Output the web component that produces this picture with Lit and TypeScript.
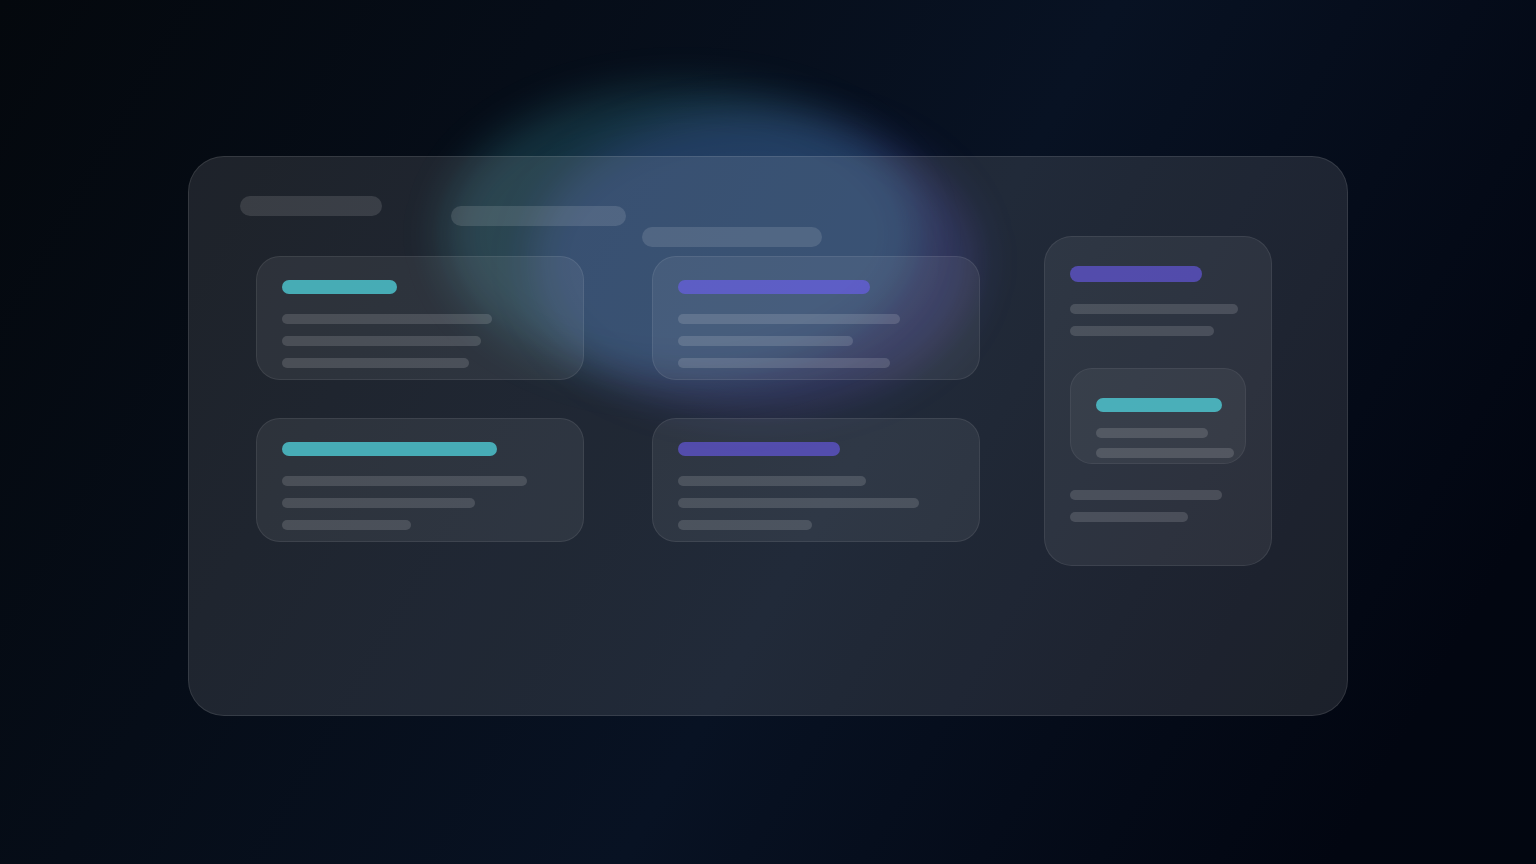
import { LitElement, html, css } from "lit";
import { customElement, property } from "lit/decorators.js";
import { styleMap } from "lit/directives/style-map.js";

interface Block {
  tone: "teal" | "violet";
  title: number;
  lines: number[];
}

const CARDS: Block[] = [
  { tone: "teal", title: 115, lines: [210, 199, 187] },
  { tone: "violet", title: 192, lines: [222, 175, 212] },
  { tone: "teal", title: 215, lines: [245, 193, 129] },
  { tone: "violet", title: 162, lines: [188, 241, 134] },
];

const TABS = [142, 175, 180];

@customElement("skeleton-bar")
class SkeletonBar extends LitElement {
  @property({ type: Number }) size = 100;
  @property() kind = "line";

  static styles = css`
    :host {
      display: block;
    }
    .bar {
      max-width: 100%;
      height: 10px;
      border-radius: 5px;
      background: rgba(255, 255, 255, 0.14);
    }
    .tab {
      height: 20px;
      border-radius: 10px;
      background: rgba(255, 255, 255, 0.12);
    }
    .teal,
    .violet {
      height: 14px;
      border-radius: 7px;
    }
    .teal {
      background: rgba(82, 224, 233, 0.7);
    }
    .violet {
      background: rgba(112, 94, 255, 0.56);
    }
    .large {
      height: 16px;
      border-radius: 8px;
    }
  `;

  render() {
    return html`<div class="bar ${this.kind}" style=${styleMap({ width: `${this.size}px` })}></div>`;
  }
}

@customElement("app-root")
class AppRoot extends LitElement {
  static styles = css`
    :host {
      display: block;
    }
    * {
      box-sizing: border-box;
    }
    .page {
      position: relative;
      min-height: 100vh;
      padding: 156px 188px 148px;
      overflow: hidden;
      background: linear-gradient(120deg, #04080d 0%, #081223 55%, #020611 90%, #020610 100%);
    }
    .glow {
      position: absolute;
      left: 50%;
      border-radius: 50%;
      filter: blur(20px);
    }
    .glow-violet {
      top: 114px;
      width: 444px;
      height: 296px;
      margin-left: -236px;
      background: rgba(112, 94, 255, 0.19);
    }
    .glow-teal {
      top: 88px;
      width: 476px;
      height: 292px;
      margin-left: -324px;
      background: rgba(78, 210, 225, 0.18);
    }
    .panel {
      position: relative;
      display: grid;
      grid-template-columns: minmax(0, 1fr) 228px;
      gap: 64px;
      align-items: start;
      min-height: 560px;
      padding: 39px 75px 39px 51px;
      border: 1px solid rgba(255, 255, 255, 0.1);
      border-radius: 36px;
      background: rgba(255, 255, 255, 0.1);
    }
    .tabs {
      display: grid;
      grid-template-columns: 211px 191px auto;
      align-items: start;
      height: 60px;
    }
    .step-1 {
      padding-top: 10px;
    }
    .step-2 {
      padding-top: 31px;
    }
    .cards {
      display: grid;
      grid-template-columns: repeat(2, minmax(0, 1fr));
      gap: 38px 68px;
      padding-left: 16px;
    }
    .card,
    .side,
    .nested {
      border: 1px solid rgba(255, 255, 255, 0.08);
      background: rgba(255, 255, 255, 0.065);
    }
    .card {
      padding: 23px 25px 11px;
      border-radius: 24px;
    }
    .lines {
      display: grid;
      gap: 12px;
      padding-top: 20px;
    }
    .side {
      margin-top: 40px;
      padding: 29px 25px 43px;
      border-radius: 28px;
    }
    .side-lines {
      padding-top: 22px;
    }
    .nested {
      margin-top: 32px;
      margin-bottom: 4px;
      padding: 29px 11px 5px 25px;
      border-radius: 22px;
      background: rgba(255, 255, 255, 0.05);
      border-color: rgba(255, 255, 255, 0.06);
    }
    .nested-lines {
      gap: 10px;
      padding-top: 16px;
    }
  `;

  private bars(sizes: number[]) {
    return sizes.map((s) => html`<skeleton-bar .size=${s}></skeleton-bar>`);
  }

  render() {
    return html`
      <div class="page">
        <div class="glow glow-violet"></div>
        <div class="glow glow-teal"></div>
        <main class="panel">
          <section>
            <div class="tabs">
              ${TABS.map((s, i) => html`<skeleton-bar class="step-${i}" kind="tab" .size=${s}></skeleton-bar>`)}
            </div>
            <div class="cards">
              ${CARDS.map(
                (c) => html`
                  <article class="card">
                    <skeleton-bar kind=${c.tone} .size=${c.title}></skeleton-bar>
                    <div class="lines">${this.bars(c.lines)}</div>
                  </article>
                `
              )}
            </div>
          </section>
          <aside class="side">
            <skeleton-bar kind="violet large" .size=${132}></skeleton-bar>
            <div class="lines side-lines">${this.bars([168, 144])}</div>
            <div class="nested">
              <skeleton-bar kind="teal" .size=${126}></skeleton-bar>
              <div class="lines nested-lines">${this.bars([112, 138])}</div>
            </div>
            <div class="lines side-lines">${this.bars([152, 118])}</div>
          </aside>
        </main>
      </div>
    `;
  }
}
